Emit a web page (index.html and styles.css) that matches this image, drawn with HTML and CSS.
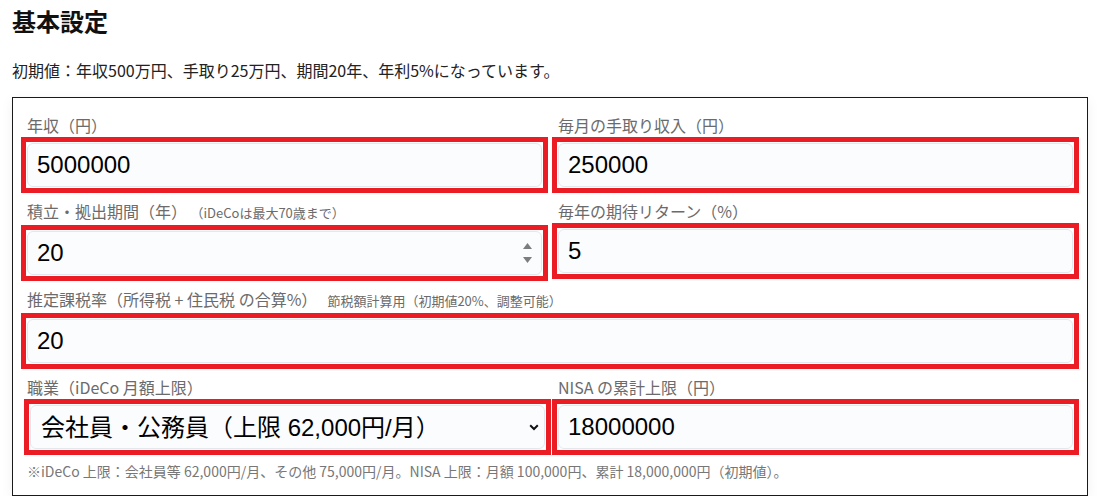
FILE: index.html
```html
<!DOCTYPE html>
<html lang="ja">
<head>
<meta charset="utf-8">
<title>基本設定</title>
<link rel="stylesheet" href="styles.css">
</head>
<body>
<main class="page">
  <h2 class="title">基本設定</h2>
  <p class="intro">初期値：年収500万円、手取り25万円、期間20年、年利5%になっています。</p>
  <section class="card">
    <div class="grid">
      <div class="field">
        <label class="label">年収（円）</label>
        <div class="control"><input class="input" type="text" value="5000000"></div>
      </div>
      <div class="field">
        <label class="label">毎月の手取り収入（円）</label>
        <div class="control"><input class="input" type="text" value="250000"></div>
      </div>
      <div class="field">
        <label class="label">積立・拠出期間（年）<span class="hint">（iDeCoは最大70歳まで）</span></label>
        <div class="control">
          <input class="input" type="text" value="20">
          <svg class="spinner" width="11" height="22" viewBox="0 0 11 22" aria-hidden="true">
            <path d="M1 7 L5.5 1 L10 7 Z" fill="#7d7d7d"/>
            <path d="M1 15 L5.5 21 L10 15 Z" fill="#7d7d7d"/>
          </svg>
        </div>
      </div>
      <div class="field">
        <label class="label">毎年の期待リターン（%）</label>
        <div class="control"><input class="input" type="text" value="5"></div>
      </div>
      <div class="field wide">
        <label class="label">推定課税率（所得税 + 住民税 の合算%）<span class="hint">節税額計算用（初期値20%、調整可能）</span></label>
        <div class="control"><input class="input" type="text" value="20"></div>
      </div>
      <div class="field">
        <label class="label">職業（iDeCo 月額上限）</label>
        <div class="control shifted">
          <select class="input select">
            <option>会社員・公務員（上限 62,000円/月）</option>
          </select>
          <svg class="chevron" width="10" height="7" viewBox="0 0 10 7" aria-hidden="true">
            <path d="M1.2 1.3 L5 5 L8.8 1.3" fill="none" stroke="#111" stroke-width="2"/>
          </svg>
        </div>
      </div>
      <div class="field">
        <label class="label">NISA の累計上限（円）</label>
        <div class="control"><input class="input" type="text" value="18000000"></div>
      </div>
    </div>
    <p class="note">※iDeCo 上限：会社員等 62,000円/月、その他 75,000円/月。NISA 上限：月額 100,000円、累計 18,000,000円（初期値）。</p>
  </section>
</main>
</body>
</html>
```

FILE: styles.css
```css
* { box-sizing: border-box; }

html, body {
  margin: 0;
  padding: 0;
  background: #ffffff;
}

body {
  font-family: "Noto Sans CJK JP", "Noto Sans", sans-serif;
  color: #111;
}

.page {
  padding: 0 12px;
  width: 1100px;
}

.title {
  margin: 0;
  padding-top: 4px;
  font-size: 24px;
  line-height: 34px;
  font-weight: 700;
  color: #111;
}

.intro {
  margin: 19px 0 0;
  font-size: 16px;
  line-height: 26px;
  color: #222;
}

.card {
  margin-top: 14px;
  width: 1076px;
  border: 1px solid #1a1a1a;
  background: #fff;
  padding: 17px 14px 14px;
  box-shadow: 0 3px 12px rgba(0, 0, 0, 0.06);
}

.grid {
  display: grid;
  grid-template-columns: 1fr 1fr;
  column-gap: 16px;
  row-gap: 14px;
}

.wide { grid-column: 1 / span 2; }

.label {
  display: block;
  font-size: 16px;
  line-height: 20px;
  color: #6b6b6b;
  margin-bottom: 8px;
  white-space: nowrap;
}

.hint {
  font-size: 13px;
  margin-left: 10px;
  color: #6b6b6b;
}

.control { position: relative; }

.control::after {
  content: "";
  position: absolute;
  top: -6px;
  right: -6px;
  bottom: -6px;
  left: -6px;
  border: 5px solid #ec1c24;
  pointer-events: none;
}

.shifted {
  margin-left: 3px;
  margin-right: -3px;
}

.input {
  display: block;
  width: 100%;
  height: 44px;
  margin: 0;
  padding: 0 9px;
  border: 1px solid #e3e8ef;
  border-radius: 6px;
  background: #fbfcfe;
  font-family: "Liberation Sans", "Noto Sans CJK JP", sans-serif;
  font-size: 24px;
  color: #000;
  outline: none;
}

.select {
  -webkit-appearance: none;
  appearance: none;
  padding: 0 34px 0 10px;
}

.spinner {
  position: absolute;
  right: 9px;
  top: 11px;
}

.chevron {
  position: absolute;
  right: 6px;
  top: 19px;
}

.note {
  margin: 12px 0 0;
  font-size: 14px;
  line-height: 20px;
  color: #777;
}
```
